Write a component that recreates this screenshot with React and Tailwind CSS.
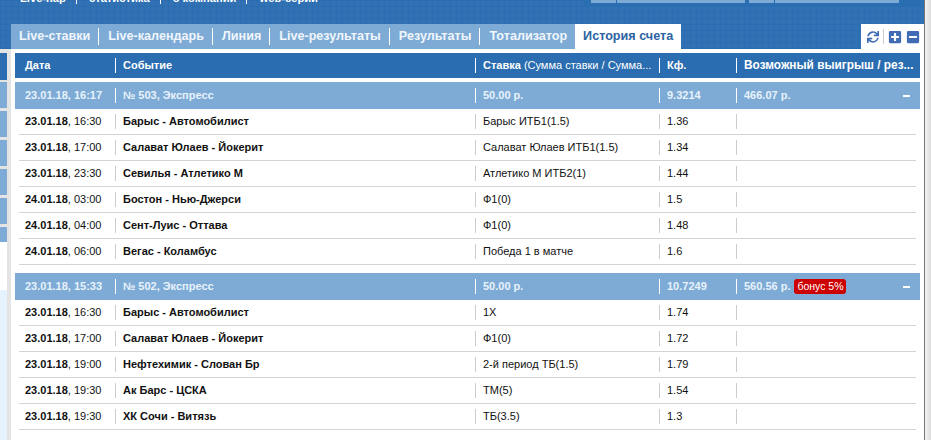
import React from 'react'
import { FaSync, FaPlusSquare, FaMinusSquare } from 'react-icons/fa'

const tabs = ['Live-ставки', 'Live-календарь', 'Линия', 'Live-результаты', 'Результаты', 'Тотализатор']

const slips = [
  {
    date: '23.01.18, 16:17',
    title: '№ 503, Экспресс',
    sum: '50.00 р.',
    coef: '9.3214',
    win: '466.07 р.',
    rows: [
      ['23.01.18', '16:30', 'Барыс - Автомобилист', 'Барыс ИТБ1(1.5)', '1.36'],
      ['23.01.18', '17:00', 'Салават Юлаев - Йокерит', 'Салават Юлаев ИТБ1(1.5)', '1.34'],
      ['23.01.18', '23:30', 'Севилья - Атлетико М', 'Атлетико М ИТБ2(1)', '1.44'],
      ['24.01.18', '03:00', 'Бостон - Нью-Джерси', 'Ф1(0)', '1.5'],
      ['24.01.18', '04:00', 'Сент-Луис - Оттава', 'Ф1(0)', '1.48'],
      ['24.01.18', '06:00', 'Вегас - Коламбус', 'Победа 1 в матче', '1.6'],
    ],
  },
  {
    date: '23.01.18, 15:33',
    title: '№ 502, Экспресс',
    sum: '50.00 р.',
    coef: '10.7249',
    win: '560.56 р.',
    bonus: 'бонус 5%',
    rows: [
      ['23.01.18', '16:30', 'Барыс - Автомобилист', '1X', '1.74'],
      ['23.01.18', '17:00', 'Салават Юлаев - Йокерит', 'Ф1(0)', '1.72'],
      ['23.01.18', '19:00', 'Нефтехимик - Слован Бр', '2-й период ТБ(1.5)', '1.79'],
      ['23.01.18', '19:30', 'Ак Барс - ЦСКА', 'ТМ(5)', '1.54'],
      ['23.01.18', '19:30', 'ХК Сочи - Витязь', 'ТБ(3.5)', '1.3'],
    ],
  },
]

function Cell({ className, line, children }) {
  return (
    <div className={`flex h-[15px] items-center border-l pl-[7px] ${line} ${className}`}>
      {children}
    </div>
  )
}

function SlipHead({ slip }) {
  return (
    <div className="flex h-[27px] items-center bg-[#7dabd5] font-bold text-[#e8f2fb]">
      <div className="w-[100px] pl-[10px]">{slip.date}</div>
      <Cell className="w-[360px]" line="border-white">{slip.title}</Cell>
      <Cell className="w-[184px]" line="border-white">{slip.sum}</Cell>
      <Cell className="w-[77px]" line="border-white">{slip.coef}</Cell>
      <Cell className="flex-1" line="border-white">
        {slip.win}
        {slip.bonus && (
          <span className="ml-[4px] flex h-[15px] w-[52px] items-center justify-center rounded-[3px] bg-[#cc0000] text-[10.5px] font-normal text-white">
            {slip.bonus}
          </span>
        )}
      </Cell>
      <div className="mr-[10px] h-[2px] w-[7px] bg-white" />
    </div>
  )
}

function BetRow({ row }) {
  return (
    <div className="mx-[4px] flex h-[26px] items-center border-b border-[#d4d4d4] text-[#111111]">
      <div className="w-[96px] pl-[6px]">
        <b>{row[0]}</b>, {row[1]}
      </div>
      <Cell className="w-[360px] font-bold" line="border-[#cccccc]">{row[2]}</Cell>
      <Cell className="w-[184px]" line="border-[#cccccc]">{row[3]}</Cell>
      <Cell className="w-[77px]" line="border-[#cccccc]">{row[4]}</Cell>
      <Cell className="flex-1" line="border-[#cccccc]" />
    </div>
  )
}

export default function App() {
  return (
    <div className="flex h-[440px] w-[931px] overflow-hidden font-['Liberation_Sans',sans-serif] text-[11px]">
      <div className="w-[924px]">
        <div className="bg-[#3272b4] bg-[linear-gradient(#2a6db0_1px,transparent_1px),linear-gradient(90deg,#2a6db0_1px,transparent_1px)] bg-[length:6px_6px]">
          {/* top menu, cut off by the screenshot */}
          <div className="flex h-[24px] items-start pl-[20px]">
            <div className="-mt-[7px] flex text-[11.2px] font-bold leading-[11px] text-white">
              <span className="border-r border-white pr-[10px]">Live-пар</span>
              <span className="border-r border-white pl-[12px] pr-[10px]">статистика</span>
              <span className="border-r border-white pl-[12px] pr-[10px]">о компании</span>
              <span className="pl-[12px]">web-серии</span>
            </div>
            <div className="ml-auto flex h-[7px] w-[340px] gap-[4px] bg-[#2a6db0] pl-[7px]">
              <div className="flex h-[3px] gap-px">
                <div className="w-[25px] bg-[#7dabd5]" />
                <div className="w-[128px] bg-[#7dabd5]" />
              </div>
              <div className="flex h-[3px] gap-px">
                <div className="w-[25px] bg-[#7dabd5]" />
                <div className="w-[124px] bg-[#7dabd5]" />
              </div>
            </div>
          </div>

          {/* tabs */}
          <div className="ml-[11px] flex h-[25px] items-stretch">
            <div className="flex bg-[#7dabd5] pl-[8px] text-[12.6px] font-bold text-[#f0f6fc]">
              {tabs.map((t, i) => (
                <div key={t} className={`my-[4px] flex items-center pr-[8px] ${i > 0 ? 'border-l border-white pl-[9px]' : ''}`}>
                  {t}
                </div>
              ))}
            </div>
            <div className="flex w-[106px] items-center justify-center bg-white text-[12.6px] font-bold text-[#2c63a3]">История счета</div>
            <div className="ml-auto flex w-[63px] items-center bg-white pl-[6px] text-[#3f6cb5]">
              <FaSync size={12} />
              <div className="ml-[4px] h-[15px] border-l border-[#cccccc]" />
              <FaPlusSquare size={14} className="ml-[4px]" />
              <FaMinusSquare size={14} className="ml-[4px]" />
            </div>
          </div>
        </div>

        <div className="flex h-[391px]">
          {/* left sidebar slice */}
          <div className="flex w-[11px] flex-col bg-[#e4e4e4] pr-[4px] pt-[4px]">
            <div className="h-[27px] bg-[#2a6db0]" />
            <div className="mt-[2px] h-[26px] bg-[#7dabd5]" />
            <div className="mt-[3px] h-[26px] bg-[#7dabd5]" />
            <div className="mt-[3px] h-[26px] bg-[#7dabd5]" />
            <div className="mt-[3px] h-[26px] bg-[#7dabd5]" />
            <div className="mt-[3px] h-[26px] bg-[#7dabd5]" />
            <div className="mt-[3px] h-[15px] bg-[#7dabd5]" />
            <div className="h-[48px] bg-white" />
            <div className="flex-1 bg-[#e6f3fd]" />
          </div>

          <div className="flex-1 bg-white px-[4px] pt-[4px]">
            {/* column header */}
            <div className="flex h-[25px] items-center bg-[#2a6db0] font-bold text-white">
              <div className="w-[100px] pl-[10px]">Дата</div>
              <Cell className="w-[360px]" line="border-white">Событие</Cell>
              <Cell className="w-[184px] whitespace-nowrap" line="border-white">
                Ставка&nbsp;<span className="font-normal">(Сумма ставки / Сумма...</span>
              </Cell>
              <Cell className="w-[77px]" line="border-white">Кф.</Cell>
              <Cell className="flex-1 whitespace-nowrap text-[11.85px]" line="border-white">Возможный выигрыш / рез...</Cell>
            </div>

            <div className="mt-[4px] flex flex-col gap-[8px]">
              {slips.map((slip) => (
                <div key={slip.title}>
                  <SlipHead slip={slip} />
                  {slip.rows.map((r) => (
                    <BetRow key={r[2]} row={r} />
                  ))}
                </div>
              ))}
            </div>
          </div>
        </div>
      </div>

      {/* window edge */}
      <div className="w-[7px] border-l border-[#777777] bg-[linear-gradient(90deg,#f2f2f2,#dddddd)]" />
    </div>
  )
}
